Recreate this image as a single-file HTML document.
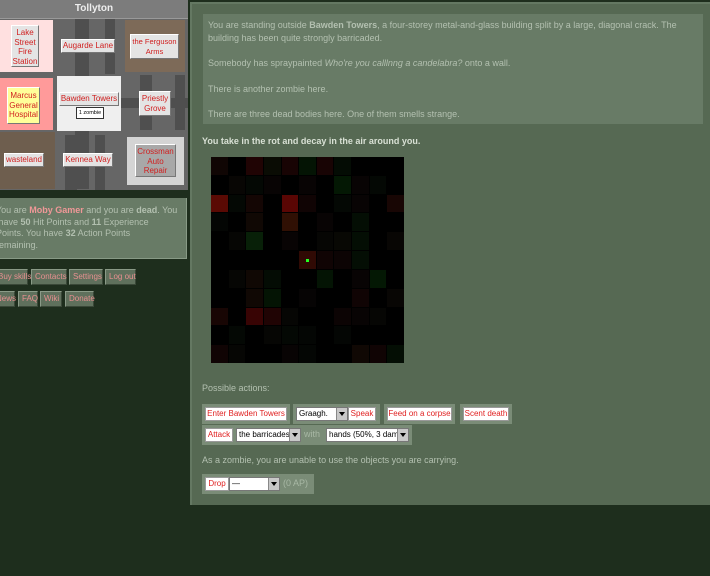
<!DOCTYPE html>
<html><head><style>
body{margin:0;width:710px;height:576px;background:#1e2e1d;font-family:"Liberation Sans",sans-serif;font-size:9px;color:#b3c0b0;position:relative;overflow:hidden}
.a{position:absolute}
.btn{position:absolute;background:#e4e4e4;border:1px solid #fff;border-right-color:#777;border-bottom-color:#777;color:#d02020;text-align:center;font-size:8px;line-height:9.5px;padding:1px 0;box-sizing:border-box;overflow:hidden}
.nw{white-space:nowrap}
.tile{position:absolute}
.fb{position:absolute;background:#7a8c77;height:20px}
.wb{position:absolute;background:#fff;border:1px solid #999;color:#e02020;font-size:8px;height:14px;line-height:12px;padding:0;text-align:center;box-sizing:border-box;top:3px;white-space:nowrap;overflow:hidden}
.sel{position:absolute;background:#fff;border:1px solid #777;color:#000;font-size:8px;height:14px;line-height:12px;padding:0 2px;box-sizing:border-box;top:3px;white-space:nowrap;overflow:hidden}
.sel i{position:absolute;right:0;top:0;width:10px;height:12px;background:#c8c8c8;border-left:1px solid #888}
.sel i:after{content:"";position:absolute;left:2px;top:4px;border:3px solid transparent;border-top:4px solid #000}
.lk{position:absolute;background:#5f705c;border:1px solid #8a9a87;border-right-color:#3a4838;border-bottom-color:#3a4838;color:#e89090;font-size:8px;height:16px;line-height:14px;padding:0 3px;box-sizing:border-box;white-space:nowrap}
.g{position:absolute;left:211px;top:157px;width:193px;height:206px;background:#000;display:grid;grid-template-columns:repeat(11,1fr);grid-template-rows:repeat(11,1fr);gap:1px}
</style></head><body>
<div class="a" style="left:0;top:0;width:188px;height:190px;background:#666"></div>
<div class="a" style="left:0;top:0;width:188px;height:18px;background:#7c7c7c;color:#eee;font-weight:bold;font-size:10px;text-align:center;line-height:18px;border-bottom:1px solid #999">Tollyton</div>
<div class="a" style="left:75px;top:19px;width:14px;height:170px;background:#4f4f4f"></div>
<div class="a" style="left:105px;top:19px;width:10px;height:55px;background:#4f4f4f"></div>
<div class="a" style="left:140px;top:75px;width:12px;height:55px;background:#4f4f4f"></div>
<div class="a" style="left:175px;top:75px;width:10px;height:55px;background:#4f4f4f"></div>
<div class="a" style="left:121px;top:98px;width:67px;height:10px;background:#4f4f4f"></div>
<div class="a" style="left:65px;top:135px;width:12px;height:55px;background:#4f4f4f"></div>
<div class="a" style="left:95px;top:135px;width:10px;height:55px;background:#4f4f4f"></div>
<div class="tile" style="left:0;top:20px;width:53px;height:52px;background:#ffe0e0"></div>
<div class="tile" style="left:125px;top:20px;width:60px;height:52px;background:#7d6a58"></div>
<div class="tile" style="left:0;top:78px;width:53px;height:52px;background:#ff9a9a"></div>
<div class="tile" style="left:57px;top:76px;width:64px;height:55px;background:#efefef"></div>
<div class="tile" style="left:0;top:132px;width:55px;height:57px;background:#6e5e4e"></div>
<div class="tile" style="left:127px;top:137px;width:57px;height:48px;background:#d4d4d4"></div>
<div class="btn" style="left:11px;top:25px;width:28px;height:42px;padding-top:2px">Lake Street Fire Station</div>
<div class="btn nw" style="left:61px;top:39px;width:54px;height:14px">Augarde Lane</div>
<div class="btn" style="left:130px;top:34px;width:49px;height:25px;padding-top:2px;font-size:7.5px;white-space:nowrap">the Ferguson<br>Arms</div>
<div class="btn" style="left:7px;top:87px;width:33px;height:37px;background:#ffff99;padding-top:3px">Marcus General Hospital</div>
<div class="btn nw" style="left:59px;top:92px;width:60px;height:14px">Bawden Towers</div>
<div class="a" style="left:76px;top:107px;width:26px;height:10px;background:#fff;border:1px solid #333;font-size:5.5px;color:#000;text-align:center;line-height:10px;white-space:nowrap">1 zombie</div>
<div class="btn" style="left:139px;top:91px;width:32px;height:25px;padding-top:2px">Priestly Grove</div>
<div class="btn nw" style="left:4px;top:153px;width:40px;height:14px">wasteland</div>
<div class="btn nw" style="left:63px;top:153px;width:50px;height:14px">Kennea Way</div>
<div class="btn" style="left:135px;top:144px;width:41px;height:33px;background:#a8a8a8;padding-top:2px">Crossman Auto Repair</div>
<div class="a" style="left:0;top:198px;width:187px;height:61px;background:#687b66;border-right:1px solid #889a86;border-bottom:1px solid #889a86;padding:7px 0 0 0;box-sizing:border-box;line-height:11.5px;font-size:9px;white-space:nowrap;overflow:hidden">
<div style="margin-left:-4px">You are <b style="color:#f09898">Moby Gamer</b> and you are <b>dead</b>. You<br>&nbsp;have <b>50</b> Hit Points and <b>11</b> Experience<br>Points. You have <b>32</b> Action Points<br>remaining.</div></div>
<div class="lk" style="left:-6px;top:269px;width:34px">Buy skills</div>
<div class="lk" style="left:31px;top:269px;width:36px">Contacts</div>
<div class="lk" style="left:69px;top:269px;width:34px">Settings</div>
<div class="lk" style="left:105px;top:269px;width:31px">Log out</div>
<div class="lk" style="left:-8px;top:291px;width:23px">News</div>
<div class="lk" style="left:18px;top:291px;width:20px">FAQ</div>
<div class="lk" style="left:40px;top:291px;width:22px">Wiki</div>
<div class="lk" style="left:65px;top:291px;width:29px">Donate</div>
<div class="a" style="left:190px;top:2px;width:520px;height:503px;background:#566953;border-left:2px solid #647862;border-top:2px solid #647862;box-sizing:border-box"></div>
<div class="a" style="left:203px;top:14px;width:500px;height:110px;background:#687b66;padding:5px 5px;box-sizing:border-box;font-size:9px;line-height:12.5px">
<div>You are standing outside <b>Bawden Towers</b>, a four-storey metal-and-glass building split by a large, diagonal crack. The building has been quite strongly barricaded.</div>
<div style="margin-top:13px">Somebody has spraypainted <i>Who're you calllnng a candelabra?</i> onto a wall.</div>
<div style="margin-top:13px">There is another zombie here.</div>
<div style="margin-top:13px">There are three dead bodies here. One of them smells strange.</div></div>
<div class="a" style="left:202px;top:136px;font-weight:bold;font-size:9px;color:#d8e0d4">You take in the rot and decay in the air around you.</div>
<div class="g">
<div style="background:#100604"></div><div></div><div style="background:#200404"></div><div style="background:#0a0c04"></div><div style="background:#180404"></div><div style="background:#041404"></div><div style="background:#180404"></div><div style="background:#040c04"></div><div></div><div></div><div></div>
<div></div><div style="background:#080604"></div><div style="background:#040804"></div><div style="background:#080404"></div><div></div><div style="background:#080404"></div><div></div><div style="background:#041804"></div><div style="background:#080404"></div><div style="background:#040804"></div><div></div>
<div style="background:#5a0a04"></div><div style="background:#040804"></div><div style="background:#140604"></div><div></div><div style="background:#5a0604"></div><div style="background:#100404"></div><div></div><div style="background:#040804"></div><div style="background:#080404"></div><div></div><div style="background:#180604"></div>
<div style="background:#040604"></div><div></div><div style="background:#100804"></div><div></div><div style="background:#301004"></div><div></div><div style="background:#080404"></div><div></div><div style="background:#040e04"></div><div></div><div></div>
<div></div><div style="background:#060604"></div><div style="background:#082008"></div><div></div><div style="background:#080404"></div><div></div><div style="background:#060604"></div><div style="background:#080804"></div><div style="background:#040e04"></div><div></div><div style="background:#080604"></div>
<div></div><div></div><div></div><div></div><div></div><div style="background:#300a04;position:relative"><span style="position:absolute;left:7px;top:8px;width:3px;height:3px;background:#2f2"></span></div><div style="background:#100404"></div><div style="background:#0c0404"></div><div style="background:#040e04"></div><div></div><div></div>
<div></div><div style="background:#060604"></div><div style="background:#100804"></div><div style="background:#040c04"></div><div></div><div></div><div style="background:#041404"></div><div></div><div style="background:#080404"></div><div style="background:#041804"></div><div></div>
<div></div><div></div><div style="background:#100804"></div><div style="background:#041404"></div><div></div><div style="background:#060404"></div><div></div><div></div><div style="background:#100404"></div><div></div><div style="background:#080604"></div>
<div style="background:#180604"></div><div></div><div style="background:#380404"></div><div style="background:#200404"></div><div style="background:#060604"></div><div></div><div></div><div style="background:#0c0404"></div><div style="background:#080404"></div><div style="background:#060604"></div><div></div>
<div></div><div style="background:#040804"></div><div></div><div style="background:#060604"></div><div style="background:#040804"></div><div style="background:#040604"></div><div></div><div style="background:#040604"></div><div></div><div></div><div></div>
<div style="background:#100404"></div><div style="background:#060604"></div><div></div><div></div><div style="background:#080404"></div><div style="background:#040604"></div><div></div><div></div><div style="background:#100804"></div><div style="background:#100404"></div><div style="background:#040e04"></div>
</div>
<div class="a" style="left:202px;top:383px;font-size:9px">Possible actions:</div>
<div class="fb" style="left:202px;top:404px;width:88px"><div class="wb" style="left:3px;width:82px">Enter Bawden Towers</div></div>
<div class="fb" style="left:293px;top:404px;width:87px"><div class="sel" style="left:3px;width:52px">Graagh.<i></i></div><div class="wb" style="left:55px;width:28px">Speak</div></div>
<div class="fb" style="left:384px;top:404px;width:71px"><div class="wb" style="left:3px;width:65px">Feed on a corpse</div></div>
<div class="fb" style="left:460px;top:404px;width:52px"><div class="wb" style="left:3px;width:46px">Scent death</div></div>
<div class="fb" style="left:202px;top:425px;width:210px"><div class="wb" style="left:3px;width:28px">Attack</div><div class="sel" style="left:34px;width:65px">the barricades<i></i></div><span style="position:absolute;left:102px;top:4px;color:#a8b8a5">with</span><div class="sel" style="left:124px;width:83px">hands (50%, 3 dam)<i></i></div></div>
<div class="a" style="left:202px;top:455px;font-size:9px">As a zombie, you are unable to use the objects you are carrying.</div>
<div class="fb" style="left:202px;top:474px;width:112px"><div class="wb" style="left:3px;width:24px">Drop</div><div class="sel" style="left:27px;width:51px">—<i></i></div><span style="position:absolute;left:81px;top:4px;color:#a8b8a5">(0 AP)</span></div>
</body></html>
